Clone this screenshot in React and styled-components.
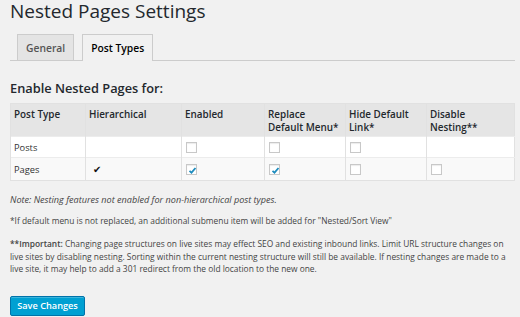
import React from 'react';
import styled, { createGlobalStyle } from 'styled-components';

const GlobalStyle = createGlobalStyle`
    html, body {
        margin: 0;
        padding: 0;
        background: #f1f1f1;
    }
    body {
        font-family: "Open Sans", "Liberation Sans", sans-serif;
        color: #444;
    }
`

const Wrap = styled.div`
    width: 505px;
    padding: 0 0 0 10px;
`
const Title = styled.h1`
    margin: 0;
    padding: 0;
    font-size: 19px;
    font-weight: 400;
    line-height: 23px;
    color: #23282d;
`
const Tabs = styled.div`
    display: flex;
    gap: 8px;
    margin-top: 11px;
    padding-left: 7px;
    border-bottom: 1px solid #ccc;
    height: 26px;
`
const Tab = styled.div`
    display: flex;
    align-items: center;
    box-sizing: border-box;
    padding: 0 8px;
    border: 1px solid #ccc;
    border-bottom: none;
    background: ${p => (p.active ? '#f1f1f1' : '#e4e4e4')};
    color: ${p => (p.active ? '#000' : '#555')};
    font-size: 10.3px;
    font-weight: 600;
    margin-bottom: ${p => (p.active ? '-1px' : '0')};
    height: ${p => (p.active ? '27px' : '26px')};
`
const Heading = styled.h3`
    margin: 19px 0 0 0;
    font-size: 12.8px;
    font-weight: 600;
    line-height: 16px;
    color: #23282d;
`
const Table = styled.table`
    margin-top: 7px;
    width: 504px;
    border-collapse: collapse;
    border: 1px solid #e1e1e1;
    font-size: 9.3px;
    table-layout: fixed;
`
const Th = styled.th`
    background: #e5e5e5;
    text-align: left;
    vertical-align: top;
    font-weight: 600;
    color: #23282d;
    font-size: 9.9px;
    line-height: 13px;
    padding: 4px 3px 2px 3px;
    height: 26px;
    border-left: 1px solid #e1e1e1;
`
const Tr = styled.tr`
    background: ${p => (p.alt ? '#f9f9f9' : '#fff')};
`
const Td = styled.td`
    padding: 0 3px;
    height: ${p => p.h}px;
    border-left: 1px solid #e1e1e1;
    border-top: 1px solid #ececec;
    vertical-align: middle;
    color: #333;
`
const Box = styled.span`
    display: block;
    width: 11px;
    height: 11px;
    box-sizing: border-box;
    border: 1px solid #c8c8c8;
    background: #fff;
    box-shadow: inset 0 1px 1px rgba(0, 0, 0, 0.08);
    position: relative;
    margin-left: 1px;
`
const Tick = styled.svg`
    position: absolute;
    left: 1px;
    top: 1px;
`
const Mark = styled.span`
    font-size: 9.5px;
    color: #111;
    padding-left: 4px;
`
const Note = styled.p`
    margin: ${p => p.mt}px 0 0 0;
    font-size: ${p => (p.italic ? '9.1px' : '8.4px')};
    line-height: 12.5px;
    font-style: ${p => (p.italic ? 'italic' : 'normal')};
    color: #444;
    b {
        font-weight: 600;
    }
`
const Button = styled.button`
    display: block;
    margin-top: 20px;
    height: 20px;
    width: 75px;
    padding: 0;
    border: 1px solid #0073aa;
    border-radius: 2px;
    background: #00a0d2;
    color: #fff;
    font-family: "Open Sans", "Liberation Sans", sans-serif;
    font-size: 9.2px;
    font-weight: 600;
    box-shadow: inset 0 1px 0 rgba(120, 200, 230, 0.5);
`

const Check = ({ on }) => (
    <Box>
        {on && (
            <Tick width="9" height="9" viewBox="0 0 9 9">
                <path d="M1.5 4.8 L3.5 6.6 L7.5 2" fill="none" stroke="#1e8cbe" strokeWidth="1.8" />
            </Tick>
        )}
    </Box>
)

const cols = [75, 96, 83, 81, 81, 88];

const App = () => (
    <Wrap>
        <GlobalStyle />
        <Title>Nested Pages Settings</Title>
        <Tabs>
            <Tab>General</Tab>
            <Tab active>Post Types</Tab>
        </Tabs>
        <Heading>Enable Nested Pages for:</Heading>
        <Table>
            <colgroup>
                {cols.map((w, i) => <col key={i} style={{ width: w }} />)}
            </colgroup>
            <thead>
                <tr>
                    <Th>Post Type</Th>
                    <Th>Hierarchical</Th>
                    <Th>Enabled</Th>
                    <Th>Replace<br />Default Menu*</Th>
                    <Th>Hide Default<br />Link*</Th>
                    <Th>Disable<br />Nesting**</Th>
                </tr>
            </thead>
            <tbody>
                <Tr>
                    <Td h={20}>Posts</Td>
                    <Td h={20}></Td>
                    <Td h={20}><Check /></Td>
                    <Td h={20}><Check /></Td>
                    <Td h={20}><Check /></Td>
                    <Td h={20}></Td>
                </Tr>
                <Tr alt>
                    <Td h={22}>Pages</Td>
                    <Td h={22}><Mark>✔</Mark></Td>
                    <Td h={22}><Check on /></Td>
                    <Td h={22}><Check on /></Td>
                    <Td h={22}><Check /></Td>
                    <Td h={22}><Check /></Td>
                </Tr>
            </tbody>
        </Table>
        <Note italic mt={13}>Note: Nesting features not enabled for non-hierarchical post types.</Note>
        <Note mt={8}>*If default menu is not replaced, an additional submenu item will be added for "Nested/Sort View"</Note>
        <Note mt={11}>
            <b>**Important:</b> Changing page structures on live sites may effect SEO and existing inbound links. Limit URL structure changes on live sites by disabling nesting. Sorting within the current nesting structure will still be available. If nesting changes are made to a live site, it may help to add a 301 redirect from the old location to the new one.
        </Note>
        <Button>Save Changes</Button>
    </Wrap>
)

export default App;
